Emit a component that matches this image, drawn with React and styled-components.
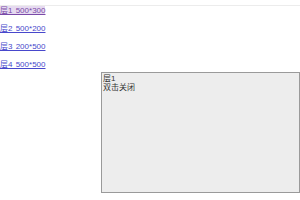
import React from "react";
import styled, { createGlobalStyle } from "styled-components";

const Global = createGlobalStyle`
  html, body { margin: 0; padding: 0; background: #fff; }
  body { font-family: "Liberation Sans", "Noto Sans CJK SC", sans-serif; font-size: 8px; }
`;

const Page = styled.div`
  position: relative;
  width: 300px;
  height: 200px;
  overflow: hidden;
  border-top: 1px solid #ececec;
  margin-top: 5px;
  box-sizing: border-box;
`;

const List = styled.div`
  display: flex;
  flex-direction: column;
  gap: 9px;
  align-items: flex-start;
`;

const Item = styled.a`
  display: inline-block;
  line-height: 9px;
  color: ${(p) => (p.$active ? "#7a4aa8" : "#4848cc")};
  background: ${(p) => (p.$active ? "#e6daf0" : "transparent")};
  text-decoration: underline;
  word-spacing: 1px;
  cursor: pointer;
`;

const Layer = styled.div`
  position: absolute;
  left: 101px;
  top: 66px;
  width: 199px;
  height: 121px;
  box-sizing: border-box;
  border: 1px solid #9a9a9a;
  background: #ededed;
  color: #333;
  padding: 1px 1px;
  line-height: 9px;
`;

const links = [
  { label: "层1 500*300", active: true },
  { label: "层2 500*200" },
  { label: "层3 200*500" },
  { label: "层4 500*500" },
];

export default function App() {
  return (
    <Page>
      <Global />
      <List>
        {links.map((l) => (
          <Item key={l.label} $active={l.active}>{l.label}</Item>
        ))}
      </List>
      <Layer>
        <div>层1</div>
        <div>双击关闭</div>
      </Layer>
    </Page>
  );
}
